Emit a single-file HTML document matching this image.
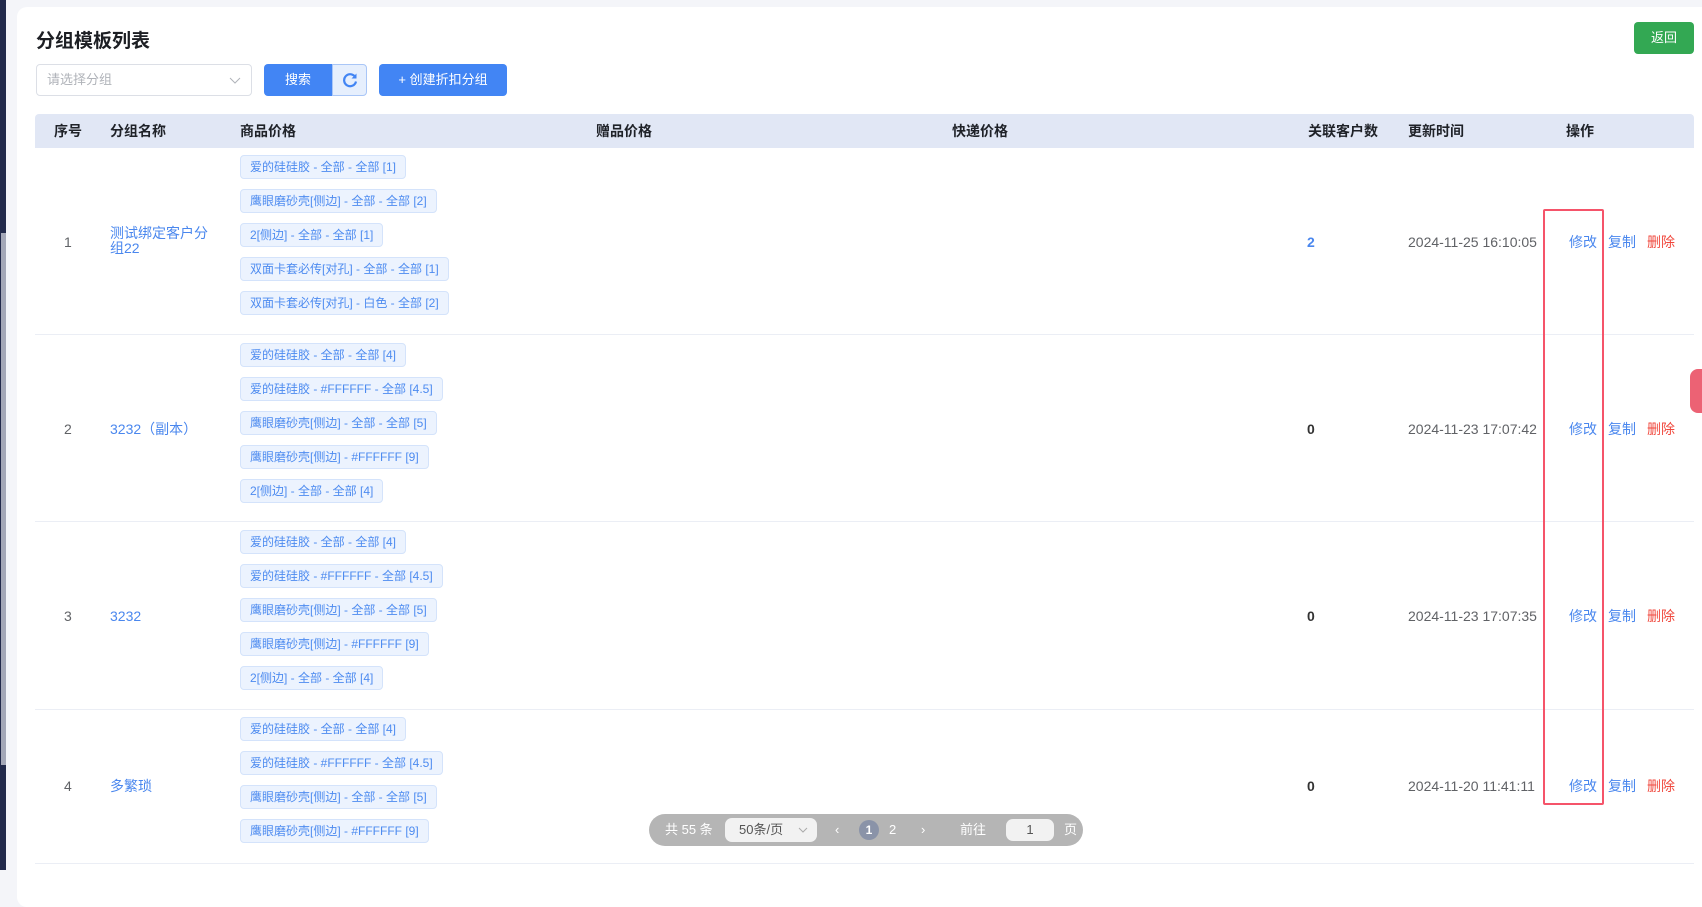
<!DOCTYPE html>
<html><head><meta charset="utf-8"><style>
*{margin:0;padding:0;box-sizing:border-box}
body{width:1702px;height:870px;overflow:hidden;background:#f4f5f9;font-family:"Liberation Sans","Noto Sans CJK SC",sans-serif;position:relative;color:#606266}
.a{position:absolute}
.card{left:17px;top:7px;width:1700px;height:900px;background:#fff;border-radius:10px}
.title{left:36px;top:26px;font-size:19px;font-weight:bold;color:#1d1f24}
.sel{left:36px;top:64px;width:216px;height:32px;border:1px solid #dcdfe6;border-radius:4px;font-size:13px;color:#b0b3b9;padding:0 10px;line-height:30px}
.btn{height:32px;border-radius:4px;color:#fff;font-size:13px;text-align:center;line-height:32px}
.th{top:114px;left:35px;width:1659px;height:34px;background:#e1e7f5;border-radius:4px 4px 0 0}
.h{top:114px;line-height:34px;font-size:14px;font-weight:bold;color:#1f2228}
.tag{left:240px;height:24px;line-height:22px;border:1px solid #d4e3fb;background:#ecf3fe;color:#4d8bf0;font-size:12px;padding:0 9px;border-radius:4px;white-space:nowrap}
.line{left:35px;width:1659px;height:1px;background:#ebeef5}
.c{font-size:14px;white-space:nowrap;line-height:16px}
.blue{color:#4a87ee}.red{color:#f0483d}
.ops span{position:absolute;top:0}
</style></head><body>
<div class="a" style="left:0;top:0;width:6px;height:870px;background:#222a4b"></div>
<div class="a" style="left:1px;top:233px;width:5px;height:532px;background:#a4a8b8"></div>
<div class="a card"></div>
<div class="a title">分组模板列表</div>
<div class="a btn" style="left:1634px;top:22px;width:60px;background:#33a853;font-size:13px">返回</div>
<div class="a sel">请选择分组<svg class="a" style="right:10px;top:12px" width="12" height="8"><path d="M1 1l5 5 5-5" stroke="#b0b3b9" fill="none"/></svg></div>
<div class="a btn" style="left:264px;top:64px;width:68px;background:#4285f4;border-radius:4px 0 0 4px">搜索</div>
<div class="a" style="left:332px;top:64px;width:35px;height:32px;background:#e6effd;border:1px solid #a9c6f7;border-radius:0 4px 4px 0"><svg class="a" style="left:9px;top:7px" width="16" height="16" viewBox="0 0 16 16"><path d="M13.5 5.5A6 6 0 1 0 14 9.5" stroke="#4285f4" stroke-width="2.2" fill="none"/><path d="M14.5 1.5v5h-5z" fill="#4285f4"/></svg></div>
<div class="a btn" style="left:379px;top:64px;width:128px;background:#4285f4">+ 创建折扣分组</div>
<div class="a th"></div>
<div class="a h" style="left:54px">序号</div>
<div class="a h" style="left:110px">分组名称</div>
<div class="a h" style="left:240px">商品价格</div>
<div class="a h" style="left:596px">赠品价格</div>
<div class="a h" style="left:952px">快递价格</div>
<div class="a h" style="left:1308px">关联客户数</div>
<div class="a h" style="left:1408px">更新时间</div>
<div class="a h" style="left:1566px">操作</div>

<!-- row1 -->
<div class="a tag" style="top:155px">爱的硅硅胶 - 全部 - 全部 [1]</div>
<div class="a tag" style="top:189px">鹰眼磨砂壳[侧边] - 全部 - 全部 [2]</div>
<div class="a tag" style="top:223px">2[侧边] - 全部 - 全部 [1]</div>
<div class="a tag" style="top:257px">双面卡套必传[对孔] - 全部 - 全部 [1]</div>
<div class="a tag" style="top:291px">双面卡套必传[对孔] - 白色 - 全部 [2]</div>
<div class="a c" style="left:64px;top:234px">1</div>
<div class="a c blue" style="left:110px;top:226px;line-height:15px">测试绑定客户分<br>组22</div>
<div class="a c blue" style="left:1307px;top:234px;font-weight:bold">2</div>
<div class="a c" style="left:1408px;top:234px">2024-11-25 16:10:05</div>
<div class="a line" style="top:334px"></div>
<!-- row2 -->
<div class="a tag" style="top:343px">爱的硅硅胶 - 全部 - 全部 [4]</div>
<div class="a tag" style="top:377px">爱的硅硅胶 - #FFFFFF - 全部 [4.5]</div>
<div class="a tag" style="top:411px">鹰眼磨砂壳[侧边] - 全部 - 全部 [5]</div>
<div class="a tag" style="top:445px">鹰眼磨砂壳[侧边] - #FFFFFF [9]</div>
<div class="a tag" style="top:479px">2[侧边] - 全部 - 全部 [4]</div>
<div class="a c" style="left:64px;top:421px">2</div>
<div class="a c blue" style="left:110px;top:421px">3232（副本）</div>
<div class="a c" style="left:1307px;top:421px;font-weight:bold;color:#333">0</div>
<div class="a c" style="left:1408px;top:421px">2024-11-23 17:07:42</div>
<div class="a line" style="top:521px"></div>
<!-- row3 -->
<div class="a tag" style="top:530px">爱的硅硅胶 - 全部 - 全部 [4]</div>
<div class="a tag" style="top:564px">爱的硅硅胶 - #FFFFFF - 全部 [4.5]</div>
<div class="a tag" style="top:598px">鹰眼磨砂壳[侧边] - 全部 - 全部 [5]</div>
<div class="a tag" style="top:632px">鹰眼磨砂壳[侧边] - #FFFFFF [9]</div>
<div class="a tag" style="top:666px">2[侧边] - 全部 - 全部 [4]</div>
<div class="a c" style="left:64px;top:608px">3</div>
<div class="a c blue" style="left:110px;top:608px">3232</div>
<div class="a c" style="left:1307px;top:608px;font-weight:bold;color:#333">0</div>
<div class="a c" style="left:1408px;top:608px">2024-11-23 17:07:35</div>
<div class="a line" style="top:709px"></div>
<!-- row4 -->
<div class="a tag" style="top:717px">爱的硅硅胶 - 全部 - 全部 [4]</div>
<div class="a tag" style="top:751px">爱的硅硅胶 - #FFFFFF - 全部 [4.5]</div>
<div class="a tag" style="top:785px">鹰眼磨砂壳[侧边] - 全部 - 全部 [5]</div>
<div class="a tag" style="top:819px">鹰眼磨砂壳[侧边] - #FFFFFF [9]</div>
<div class="a c" style="left:64px;top:778px">4</div>
<div class="a c blue" style="left:110px;top:778px">多繁琐</div>
<div class="a c" style="left:1307px;top:778px;font-weight:bold;color:#333">0</div>
<div class="a c" style="left:1408px;top:778px">2024-11-20 11:41:11</div>
<div class="a line" style="top:863px"></div>

<!-- ops -->
<div class="a c ops" style="left:0;top:234px"><span class="blue" style="left:1569px">修改</span><span class="blue" style="left:1608px">复制</span><span class="red" style="left:1647px">删除</span></div>
<div class="a c ops" style="left:0;top:421px"><span class="blue" style="left:1569px">修改</span><span class="blue" style="left:1608px">复制</span><span class="red" style="left:1647px">删除</span></div>
<div class="a c ops" style="left:0;top:608px"><span class="blue" style="left:1569px">修改</span><span class="blue" style="left:1608px">复制</span><span class="red" style="left:1647px">删除</span></div>
<div class="a c ops" style="left:0;top:778px"><span class="blue" style="left:1569px">修改</span><span class="blue" style="left:1608px">复制</span><span class="red" style="left:1647px">删除</span></div>
<div class="a" style="left:1543px;top:209px;width:61px;height:596px;border:2px solid #f5546a;border-radius:2px"></div>
<div class="a" style="left:1690px;top:369px;width:20px;height:44px;background:#ec6274;border-radius:8px"></div>

<!-- pagination -->
<div class="a" style="left:649px;top:814px;width:434px;height:32px;background:#b5b5b5;border-radius:16px;color:#fff;font-size:13px;line-height:16px">
<span class="a" style="left:16px;top:8px">共 55 条</span>
<div class="a" style="left:76px;top:4px;width:92px;height:24px;background:#f2f2f2;border-radius:7px;color:#555;padding:0 14px;line-height:24px">50条/页<svg class="a" style="right:9px;top:9px" width="10" height="6"><path d="M1 1l4 4 4-4" stroke="#aaa" fill="none"/></svg></div>
<span class="a" style="left:186px;top:8px">‹</span>
<div class="a" style="left:210px;top:6px;width:20px;height:20px;border-radius:10px;background:#8a93a8;text-align:center;line-height:20px;font-weight:bold;font-size:12px">1</div>
<span class="a" style="left:240px;top:8px">2</span>
<span class="a" style="left:272px;top:8px">›</span>
<span class="a" style="left:311px;top:8px">前往</span>
<div class="a" style="left:357px;top:5px;width:48px;height:22px;background:#f2f2f2;border-radius:7px;color:#555;text-align:center;line-height:22px">1</div>
<span class="a" style="left:415px;top:8px">页</span>
</div>
</body></html>
